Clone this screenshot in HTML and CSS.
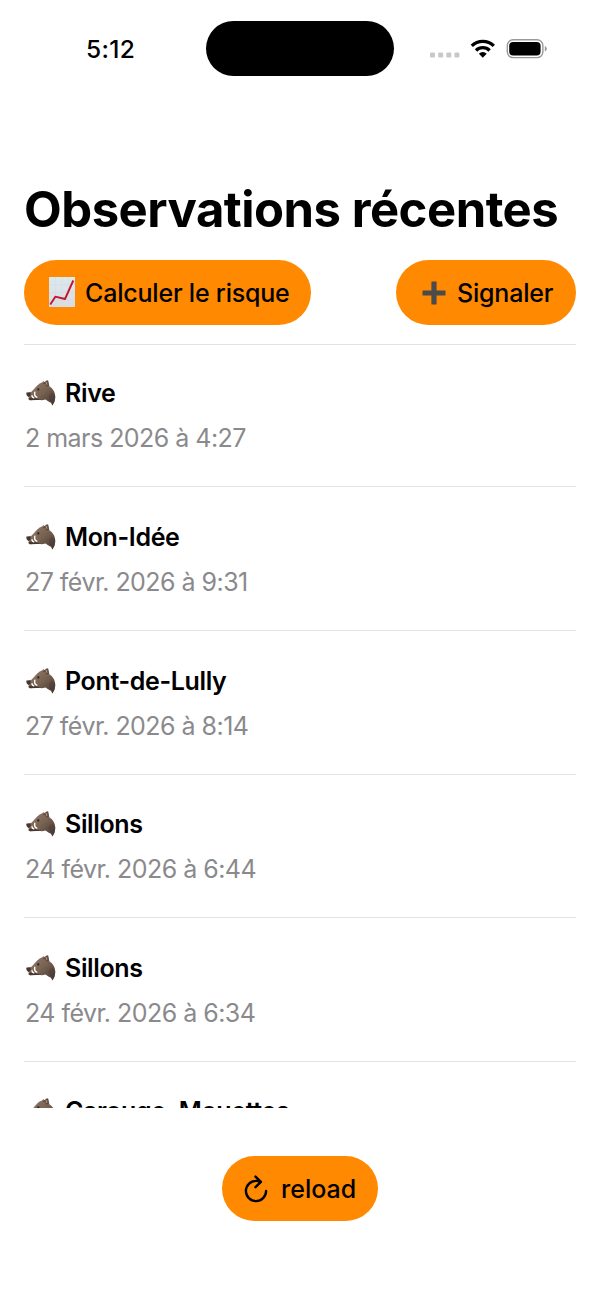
FILE: index.html
```html
<!DOCTYPE html>
<html lang="fr">
<head>
<meta charset="utf-8">
<title>Observations récentes</title>
<link rel="stylesheet" href="styles.css">
</head>
<body>
<svg class="sprite" width="0" height="0" aria-hidden="true">
  <defs>
    <linearGradient id="fur" x1="0" y1="0" x2="1" y2="1">
      <stop offset="0" stop-color="#98806f"/>
      <stop offset=".55" stop-color="#76604f"/>
      <stop offset="1" stop-color="#3f3430"/>
    </linearGradient>
    <symbol id="boar" viewBox="0 0 30 26">
      <path fill="url(#fur)" d="M.3 12.8 4.8 12.2C8 10.2 9.6 6.2 13.6 3.6L16 2.6 17.2 1.2 19 1.9 20.2.5 22 .4 22.8 3.2 23.4 6.2C27 8.6 29.2 12 29.3 17.2L28.7 21.2 26.6 25.4 25 22.8 22.4 21.6 19.6 19.5 16 20.2 11 19.6 4 20.2 2.3 19 2.9 17.2.9 15.8Z"/>
      <path fill="#493c36" d="M23 15.5C22.6 18 24 20.3 26.4 25.4L28.7 21.2 29.2 16 26.5 12.5Z" opacity=".5"/>
      <path fill="#5a463d" d="M17 3.6 20.5 1 22.1.6 22.7 6 20.4 6.5 19.6 4.6Z"/>
      <path fill="#b08d7d" d="M19.3 2.6 21.2 2 21.3 5.2 20.4 5Z"/>
      <path fill="#443733" d="M.4 12.8 4.6 12.3 4.8 15.3 2.8 17 .9 15.6ZM4.1 17.4 9 18.2 15.8 19.7 11 20 4 20.2 2.5 19Z"/>
      <circle cx="12.3" cy="9.4" r="1.1" fill="#282321"/>
      <path fill="none" stroke="#fff" stroke-width="1.4" stroke-linecap="round" d="M8.8 12.3C8.3 14.5 9.2 16.5 10.8 17.2M6 15.6C6 16.7 6.6 17.6 7.6 17.8"/>
    </symbol>
  </defs>
</svg>
<div class="screen">
  <header class="status">
    <span class="time">5:12</span>
    <span class="island"></span>
    <span class="indicators">
      <svg width="118" height="20" viewBox="0 0 118 20">
        <g fill="#c8c8c8"><rect x="0" y="13.5" width="5" height="5" rx="1.3"/><rect x="8.2" y="13.5" width="5" height="5" rx="1.3"/><rect x="16.3" y="13.5" width="5" height="5" rx="1.3"/><rect x="24.4" y="13.5" width="5" height="5" rx="1.3"/></g>
        <path fill="none" stroke="#000" stroke-width="3.3" d="M41.8 6.9A15.5 15.5 0 0 1 63.8 6.9M46 11.5A9.6 9.6 0 0 1 59.6 11.5"/>
        <path d="M48.9 14.7A5.4 5.4 0 0 1 56.7 14.7L52.8 18.8Z"/>
        <rect x="77.3" y="0.8" width="35.6" height="17.8" rx="5.8" fill="#fff" stroke="#999" stroke-width="1.4"/>
        <rect x="79.2" y="3" width="31.4" height="13.4" rx="4"/>
        <path fill="#999" d="M114.8 7C117.5 8 117.5 11.5 114.8 12.5Z"/>
      </svg>
    </span>
  </header>
  <main class="page">
    <h1 class="title">Observations récentes</h1>
    <div class="actions">
      <button class="pill calc">
        <svg width="26" height="31" viewBox="0 0 26 31"><defs><linearGradient id="paper" x2="0" y2="1"><stop stop-color="#dce9ef"/><stop offset="1" stop-color="#dadde0"/></linearGradient></defs><rect width="26" height="30" fill="url(#paper)"/><path stroke="#cfdae0" stroke-width=".4" d="M0 7.7H26M0 15.5H26M0 23.2H26M6.5 0V30M13 0V30M19.5 0V30"/><path fill="none" stroke="#c41530" stroke-width="1.9" stroke-linejoin="round" d="M1.3 27.5 6.3 19.7 16 22 24.3 3.5"/></svg>
        <span>Calculer le risque</span>
      </button>
      <button class="pill report">
        <svg width="24" height="24" viewBox="0 0 24 24"><path fill="#4b4b4b" d="M10 .5H14Q14.6.5 14.6 1V9.4H23Q23.5 9.4 23.5 10V14Q23.5 14.6 23 14.6H14.6V23Q14.6 23.5 14 23.5H10Q9.4 23.5 9.4 23V14.6H1Q.5 14.6.5 14V10Q.5 9.4 1 9.4H9.4V1Q9.4.5 10 .5Z"/></svg>
        <span>Signaler</span>
      </button>
    </div>
    <ul class="list">
      <li class="row"><div class="place"><svg class="boar"><use href="#boar"/></svg><span>Rive</span></div><div class="date">2 mars 2026 à 4:27</div></li>
      <li class="row"><div class="place"><svg class="boar"><use href="#boar"/></svg><span>Mon-Idée</span></div><div class="date">27 févr. 2026 à 9:31</div></li>
      <li class="row"><div class="place"><svg class="boar"><use href="#boar"/></svg><span>Pont-de-Lully</span></div><div class="date">27 févr. 2026 à 8:14</div></li>
      <li class="row"><div class="place"><svg class="boar"><use href="#boar"/></svg><span>Sillons</span></div><div class="date">24 févr. 2026 à 6:44</div></li>
      <li class="row"><div class="place"><svg class="boar"><use href="#boar"/></svg><span>Sillons</span></div><div class="date">24 févr. 2026 à 6:34</div></li>
      <li class="row"><div class="place"><svg class="boar"><use href="#boar"/></svg><span>Carouge, Mouettes</span></div></li>
    </ul>
  </main>
  <footer class="footer">
    <button class="pill reload">
      <svg width="24" height="28" viewBox="0 0 24 28" fill="none" stroke="#000" stroke-width="2.4" stroke-linecap="round" stroke-linejoin="round"><path d="M22.1 16A10.1 10.1 0 1 1 12 5.9Q14.5 5.9 16.5 6.9M11.5 1.6 16.9 6.9 11.5 12.2"/></svg>
      <span>reload</span>
    </button>
  </footer>
</div>
</body>
</html>
```
FILE: styles.css
```css
* { box-sizing: border-box; }
body { margin: 0; background: #fff; color: #000; font-family: Inter, "Liberation Sans", sans-serif; }
.sprite { position: absolute; }
.screen { width: 600px; height: 1299px; overflow: hidden; display: flex; flex-direction: column; background: #fff; }
.status { height: 179px; flex: none; display: flex; align-items: flex-start; }
.time { width: 206px; padding: 34px 0 0 86px; font-size: 24.5px; line-height: 30px; font-weight: 550; letter-spacing: 0.3px; }
.island { width: 188px; height: 55px; margin-top: 21px; border-radius: 28px; background: #000; }
.indicators { margin: 39px 0 0 36px; line-height: 0; }
.page { height: 929px; flex: none; padding: 0 24px; overflow: hidden; }
.title { margin: 0; height: 81px; font-size: 49px; line-height: 61px; font-weight: 700; letter-spacing: -0.5px; white-space: nowrap; }
.actions { display: flex; justify-content: space-between; height: 84px; }
.pill { display: flex; align-items: center; height: 65px; border: 0; border-radius: 33px; background: #ff8900; color: #000; font: 500 25px/30px Inter, "Liberation Sans", sans-serif; padding: 0; white-space: nowrap; }
.pill svg { flex: none; }
.calc { width: 287px; padding-left: 25px; gap: 10px; letter-spacing: -0.2px; }
.report { width: 180px; padding-left: 26px; gap: 11px; letter-spacing: -0.2px; }
.list { list-style: none; margin: 0; padding: 0; border-top: 1px solid #e2e2e2; }
.row { height: 143.6px; border-bottom: 1px solid #e2e2e2; padding-top: 34.6px; }
.row:first-child { height: 142.4px; padding-top: 33px; }
.place { display: flex; align-items: center; gap: 9px; height: 30px; font-size: 25px; line-height: 30px; font-weight: 600; letter-spacing: -0.35px; }
.boar { width: 30px; height: 26px; margin-left: 2px; }
.date { margin-top: 15px; padding-left: 1px; font-size: 25px; line-height: 30px; color: #8a8a8d; letter-spacing: -0.53px; }
.footer { flex: 1; display: flex; justify-content: center; padding-top: 48px; }
.reload { width: 156px; padding-left: 22px; gap: 13px; }
```
